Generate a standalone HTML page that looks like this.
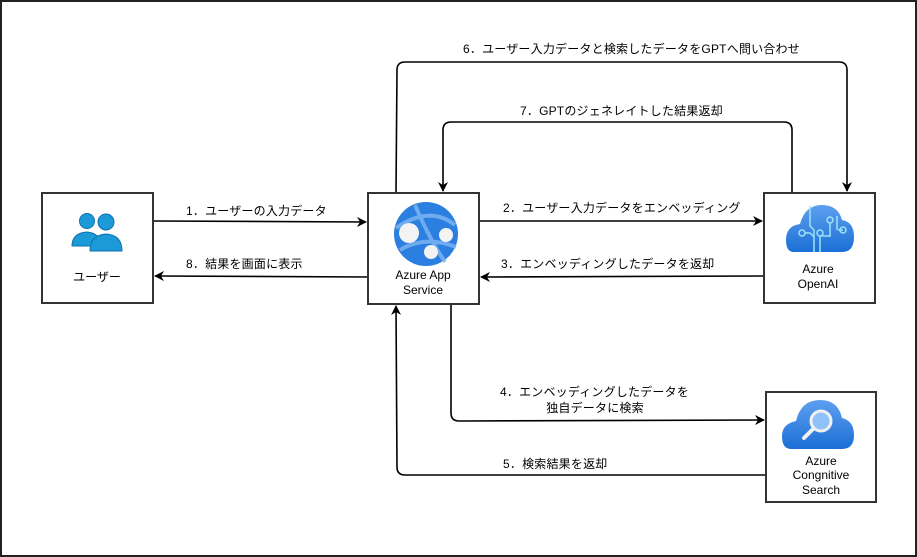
<!DOCTYPE html>
<html><head><meta charset="utf-8"><style>
html,body{margin:0;padding:0;background:#fff}
svg{display:block}
text{font-family:"Liberation Sans","Noto Sans CJK JP",sans-serif;font-size:12px;fill:#000}
.l{letter-spacing:0.2px}
</style></head><body>
<svg width="917" height="557" viewBox="0 0 917 557">
<defs>
<marker id="a" markerWidth="10" markerHeight="10" refX="9" refY="5" orient="auto" markerUnits="userSpaceOnUse"><path d="M0,0 L10,5 L0,10 L3,5 Z" fill="#000"/></marker>
<linearGradient id="cl" x1="0" y1="0" x2="0" y2="1"><stop offset="0" stop-color="#5ea0ef"/><stop offset="1" stop-color="#1b6fd6"/></linearGradient>
</defs>
<rect x="1" y="1" width="915" height="555" fill="#fff" stroke="#222" stroke-width="2"/>
<g fill="none" stroke="#000" stroke-width="1.6">
<path d="M153,221 L366,222" marker-end="url(#a)"/>
<path d="M368,277 L155,276" marker-end="url(#a)"/>
<path d="M479,221 L762,221" marker-end="url(#a)"/>
<path d="M764,276 L481,277" marker-end="url(#a)"/>
<path d="M396,193 L397,70 Q397,62 405,62 L839,62 Q847,62 847,70 L847,191" marker-end="url(#a)"/>
<path d="M792,193 L792,130 Q792,122 784,122 L451,122 Q443,122 443,130 L443,191" marker-end="url(#a)"/>
<path d="M451,304 L451,413 Q451,421 459,421 L764,420" marker-end="url(#a)"/>
<path d="M766,475 L405,475 Q397,475 397,467 L396,306" marker-end="url(#a)"/>
</g>
<g fill="#fff" stroke="#333" stroke-width="2">
<rect x="42" y="193" width="111" height="110"/>
<rect x="368" y="193" width="111" height="111"/>
<rect x="764" y="193" width="111" height="110"/>
<rect x="766" y="392" width="110" height="110"/>
</g>
<g fill="#1c9ad8" stroke="#0e6fae" stroke-width="1">
<circle cx="87" cy="221" r="7.5"/>
<path d="M72,246 Q72,233 87,232 Q100,233 102,246 Z"/>
<circle cx="106" cy="222" r="8"/>
<path d="M90,251 Q90,235 106,234 Q122,235 122,251 Z"/>
</g>
<text x="97" y="281" text-anchor="middle">ユーザー</text>
<circle cx="426" cy="234" r="32" fill="#2a7fe0"/>
<path d="M396,228 Q430,205 455,225 M400,250 Q425,235 456,247 M415,205 Q430,240 445,262" stroke="#7fb6f2" stroke-width="4" fill="none" opacity="0.8"/>
<circle cx="409" cy="233" r="10" fill="#f3f3f3"/>
<circle cx="446" cy="235" r="7" fill="#f3f3f3"/>
<circle cx="431" cy="252" r="7" fill="#f3f3f3"/>
<text x="423" y="279" text-anchor="middle">Azure App</text>
<text x="423" y="294" text-anchor="middle">Service</text>
<path d="M794,252 Q786,252 786,240 Q786,226 800,224 Q805,205 822,205 Q838,205 842,220 Q854,222 854,237 Q854,252 842,252 Z" fill="url(#cl)"/>
<g stroke="#9ee3f7" stroke-width="1.5" fill="none">
<path d="M810,206 V226 L814,230 V252 M820,252 V236 M805,233 H810 L814,237 M830,223 V236 L822,236 M837,216 V230 M843,230 H838"/>
<circle cx="830" cy="220" r="3"/><circle cx="802" cy="233" r="3"/><circle cx="820" cy="233" r="3"/><circle cx="843" cy="230" r="3"/>
</g>
<text x="818" y="273" text-anchor="middle">Azure</text>
<text x="818" y="288" text-anchor="middle">OpenAI</text>
<path d="M791,449 Q782,449 782,436 Q782,424 796,421 Q801,400 820,400 Q838,400 842,418 Q854,421 854,435 Q854,449 842,449 Z" fill="url(#cl)"/>
<circle cx="821" cy="421" r="10" fill="#8fc2f7" stroke="#f0f0f0" stroke-width="3"/>
<path d="M813,429 L804,438" stroke="#f0f0f0" stroke-width="4" stroke-linecap="round"/>
<text x="821" y="465" text-anchor="middle">Azure</text>
<text x="821" y="479" text-anchor="middle">Congnitive</text>
<text x="821" y="494" text-anchor="middle">Search</text>
<text class="l" x="186" y="215">1．ユーザーの入力データ</text>
<text class="l" x="186" y="268">8．結果を画面に表示</text>
<text class="l" x="503" y="212">2．ユーザー入力データをエンベッディング</text>
<text class="l" x="501" y="268">3．エンベッディングしたデータを返却</text>
<text class="l" x="500" y="396">4．エンベッディングしたデータを</text>
<text class="l" x="595" y="412" text-anchor="middle">独自データに検索</text>
<text class="l" x="503" y="468">5．検索結果を返却</text>
<text class="l" x="463" y="53">6．ユーザー入力データと検索したデータをGPTへ問い合わせ</text>
<text class="l" x="520" y="115">7．GPTのジェネレイトした結果返却</text>
</svg>
</body></html>
